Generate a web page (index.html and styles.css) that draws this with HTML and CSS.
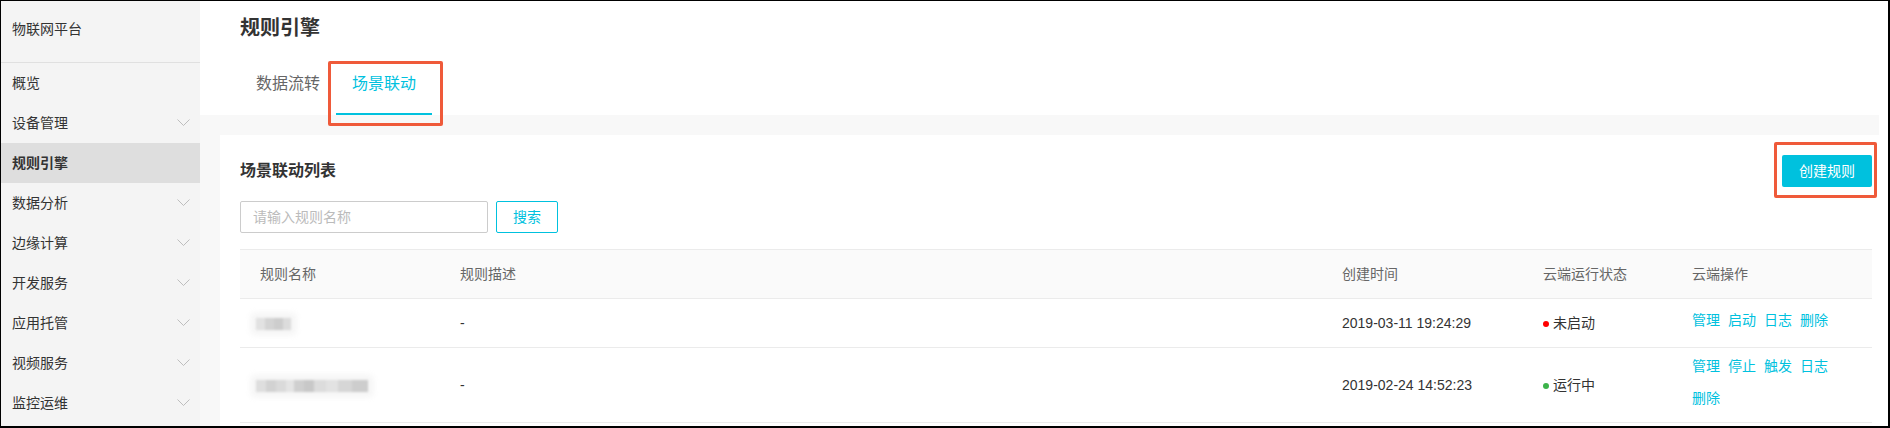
FILE: index.html
```html
<!DOCTYPE html>
<html lang="zh-CN">
<head>
    <meta charset="UTF-8">
    <title>规则引擎</title>
    <link rel="stylesheet" href="styles.css">
</head>
<body>
<div class="frame">
    <!-- 左侧菜单 -->
    <div class="sidebar">
        <div class="brand">物联网平台</div>
        <ul class="menu">
            <li class="menu-item">概览</li>
            <li class="menu-item">设备管理<svg class="chev" width="13" height="8" viewBox="0 0 13 8"><polyline points="0.5,0.5 6.5,6.5 12.5,0.5"/></svg></li>
            <li class="menu-item active">规则引擎</li>
            <li class="menu-item">数据分析<svg class="chev" width="13" height="8" viewBox="0 0 13 8"><polyline points="0.5,0.5 6.5,6.5 12.5,0.5"/></svg></li>
            <li class="menu-item">边缘计算<svg class="chev" width="13" height="8" viewBox="0 0 13 8"><polyline points="0.5,0.5 6.5,6.5 12.5,0.5"/></svg></li>
            <li class="menu-item">开发服务<svg class="chev" width="13" height="8" viewBox="0 0 13 8"><polyline points="0.5,0.5 6.5,6.5 12.5,0.5"/></svg></li>
            <li class="menu-item">应用托管<svg class="chev" width="13" height="8" viewBox="0 0 13 8"><polyline points="0.5,0.5 6.5,6.5 12.5,0.5"/></svg></li>
            <li class="menu-item">视频服务<svg class="chev" width="13" height="8" viewBox="0 0 13 8"><polyline points="0.5,0.5 6.5,6.5 12.5,0.5"/></svg></li>
            <li class="menu-item">监控运维<svg class="chev" width="13" height="8" viewBox="0 0 13 8"><polyline points="0.5,0.5 6.5,6.5 12.5,0.5"/></svg></li>
        </ul>
    </div>

    <div class="main">
        <div class="page-head">
            <h1 class="page-title">规则引擎</h1>
            <div class="tabs">
                <a class="tab" href="javascript:;">数据流转</a>
                <a class="tab current" href="javascript:;">场景联动<span class="mark mark-tab"></span></a>
            </div>
        </div>

        <div class="content">
            <div class="card">
                <div class="card-head">
                    <h2 class="card-title">场景联动列表</h2>
                    <span class="create-wrap">
                        <a class="btn-primary" href="javascript:;">创建规则</a>
                        <span class="mark mark-btn"></span>
                    </span>
                </div>

                <div class="toolbar">
                    <input class="search-input" type="text" placeholder="请输入规则名称">
                    <a class="btn-line" href="javascript:;">搜索</a>
                </div>

                <table class="rule-table">
                    <colgroup>
                        <col style="width:200px">
                        <col>
                        <col style="width:201px">
                        <col style="width:149px">
                        <col style="width:200px">
                    </colgroup>
                    <thead>
                    <tr>
                        <th>规则名称</th>
                        <th>规则描述</th>
                        <th>创建时间</th>
                        <th>云端运行状态</th>
                        <th>云端操作</th>
                    </tr>
                    </thead>
                    <tbody>
                    <tr>
                        <td><span class="blur blur-short"></span></td>
                        <td>-</td>
                        <td>2019-03-11 19:24:29</td>
                        <td><i class="dot dot-off"></i>未启动</td>
                        <td class="ops">
                            <a href="javascript:;">管理</a><a href="javascript:;">启动</a><a href="javascript:;">日志</a><a href="javascript:;">删除</a>
                        </td>
                    </tr>
                    <tr>
                        <td><span class="blur blur-long"></span></td>
                        <td>-</td>
                        <td>2019-02-24 14:52:23</td>
                        <td><i class="dot dot-on"></i>运行中</td>
                        <td class="ops">
                            <a href="javascript:;">管理</a><a href="javascript:;">停止</a><a href="javascript:;">触发</a><a href="javascript:;">日志</a><a href="javascript:;">删除</a>
                        </td>
                    </tr>
                    </tbody>
                </table>
            </div>
        </div>
    </div>
</div>
</body>
</html>
```

FILE: styles.css
```css
*{
    margin: 0;
    padding: 0;
    box-sizing: border-box;
}

body{
    font-family: "Liberation Sans", "Noto Sans CJK SC", sans-serif;
    font-size: 14px;
    color: #333;
    background-color: #fff;
}

a{
    text-decoration: none;
}

/*截图外面的黑框*/
.frame{
    width: 1890px;
    height: 428px;
    display: flex;
    border-style: solid;
    border-color: #000;
    border-width: 1px 2px 2px 1px;
    overflow: hidden;
}

/* 左侧菜单 */
.sidebar{
    width: 199px;
    flex-shrink: 0;
    background-color: #f4f4f4;
}

.brand{
    height: 62px;
    padding: 17px 0 0 11px;
    line-height: 22px;
    border-bottom: 1px solid #e0e0e0;
}

.menu{
    list-style: none;
}

.menu-item{
    height: 40px;
    line-height: 40px;
    padding: 0 10px 0 11px;
    display: flex;
    align-items: center;
    justify-content: space-between;
    color: #333;
}

.menu-item.active{
    background-color: #dedede;
    font-weight: bold;
}

.chev{
    fill: none;
    stroke: #bdbdbd;
    stroke-width: 1;
}

/* 右侧主体 */
.main{
    flex: 1;
    display: flex;
    flex-direction: column;
}

.page-head{
    height: 114px;
    padding-left: 40px;
    background-color: #fff;
}

.page-title{
    padding-top: 13px;
    line-height: 28px;
    font-size: 20px;
    font-weight: bold;
    color: #333;
}

.tabs{
    margin-top: 13px;
    display: flex;
}

.tab{
    position: relative;
    height: 60px;
    line-height: 58px;
    padding: 0 16px;
    font-size: 16px;
    color: #666;
    border-bottom: 2px solid transparent;
}

.tab.current{
    color: #00c1de;
    border-bottom-color: #00c1de;
}

/*红色标注框*/
.mark{
    position: absolute;
    border: 3px solid #ef5a3a;
    border-radius: 2px;
}

.mark-tab{
    left: -8px;
    top: 6px;
    width: 115px;
    height: 65px;
}

.content{
    flex: 1;
    margin-right: 9px;
    padding: 20px 0 0 20px;
    background-color: #f8f8f8;
    display: flex;
}

.card{
    flex: 1;
    padding: 20px 7px 0 20px;
    background-color: #fff;
}

.card-head{
    height: 32px;
    display: flex;
    align-items: center;
    justify-content: space-between;
}

.card-title{
    font-size: 16px;
    font-weight: bold;
    color: #333;
    margin-top: -4px;
}

.create-wrap{
    position: relative;
    display: block;
}

.btn-primary{
    display: block;
    width: 90px;
    height: 32px;
    line-height: 32px;
    text-align: center;
    color: #fff;
    background-color: #00c1de;
    border-radius: 2px;
}

.mark-btn{
    left: -8px;
    top: -13px;
    width: 103px;
    height: 56px;
}

.toolbar{
    margin-top: 14px;
    display: flex;
    gap: 8px;
}

.search-input{
    width: 248px;
    height: 32px;
    padding: 0 12px;
    border: 1px solid #ccc;
    border-radius: 2px;
    font-family: inherit;
    font-size: 14px;
    color: #333;
    outline: none;
}

.search-input::placeholder{
    color: #bbb;
}

.btn-line{
    display: block;
    width: 62px;
    height: 32px;
    line-height: 30px;
    text-align: center;
    color: #00c1de;
    border: 1px solid #00c1de;
    border-radius: 2px;
}

/* 表格 */
.rule-table{
    margin-top: 16px;
    width: 100%;
    table-layout: fixed;
    border-collapse: collapse;
}

.rule-table th{
    text-align: left;
    font-weight: normal;
    color: #666;
    background-color: #fafafa;
    padding: 12px 20px;
    line-height: 24px;
    border-top: 1px solid #ebebeb;
    border-bottom: 1px solid #ebebeb;
}

.rule-table td{
    padding: 12px 20px;
    line-height: 24px;
    color: #333;
    border-bottom: 1px solid #ebebeb;
    vertical-align: middle;
}

.rule-table td.ops{
    padding: 2px 12px 8px 20px;
    line-height: 32px;
}

/*操作链接不能在字中间折行*/
.ops a{
    display: inline-block;
    white-space: nowrap;
    line-height: 20px;
    margin: 6px 8px 6px 0;
    color: #00c1de;
}

.dot{
    display: inline-block;
    width: 6px;
    height: 6px;
    border-radius: 50%;
    margin-right: 4px;
    vertical-align: 1px;
}

.dot-off{
    background-color: #f00;
}

.dot-on{
    background-color: #3cb34a;
}

/*打码的规则名称*/
.blur{
    display: inline-block;
    height: 12px;
    vertical-align: middle;
    margin-left: -4px;
    filter: blur(1px);
    box-shadow: 0 0 6px 5px #f5f5f5;
}

.blur-short{
    width: 35px;
    background: linear-gradient(90deg, #e2e2e2 0 9px, #d4d4d4 9px 18px, #cdcdcd 18px 27px, #dcdcdc 27px);
}

.blur-long{
    width: 112px;
    background: linear-gradient(90deg, #dedede 0 10px, #d2d2d2 10px 20px, #dadada 20px 30px, #e4e4e4 30px 38px,
        #cfcfcf 38px 48px, #c8c8c8 48px 58px, #dcdcdc 58px 70px, #e2e2e2 70px 82px, #d6d6d6 82px 96px, #cdcdcd 96px);
}
```
